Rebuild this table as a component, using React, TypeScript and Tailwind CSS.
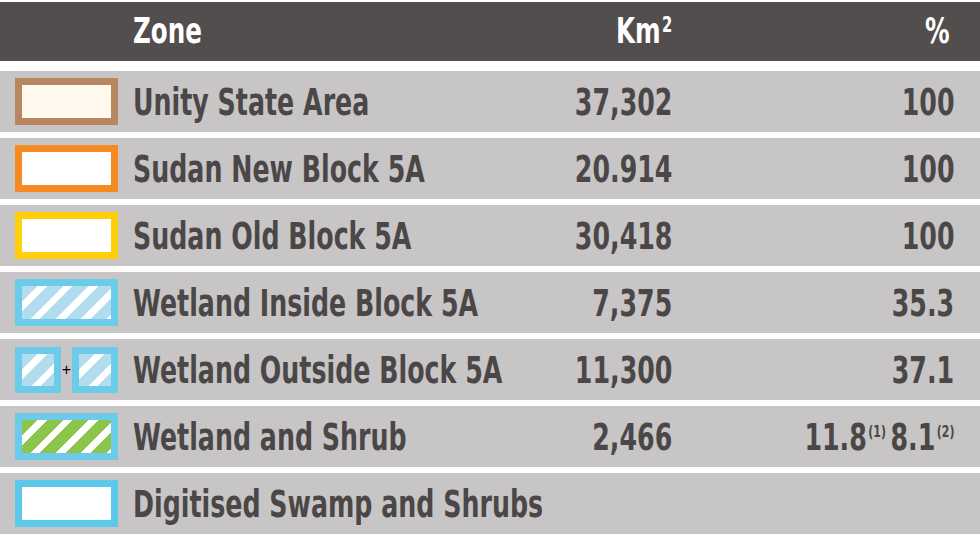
const FONT = "font-['DejaVu_Sans_Condensed','DejaVu_Sans',sans-serif]";

type Swatch = "brown" | "orange" | "yellow" | "blueStripe" | "double" | "greenStripe" | "blue";

interface ZoneRow {
  swatch: Swatch;
  name: string;
  km?: string;
  pct?: React.ReactNode;
}

// the source face is a bold condensed; squeeze DejaVu Condensed a bit more to match
function Narrow({ children, right, head }: { children: React.ReactNode; right?: boolean; head?: boolean }) {
  return (
    <span
      className={`inline-block whitespace-nowrap ${head ? "scale-x-[0.78]" : "scale-x-[0.76]"} ${
        right ? "origin-right" : "origin-left"
      }`}
    >
      {children}
    </span>
  );
}

const ROWS: ZoneRow[] = [
  { swatch: "brown", name: "Unity State Area", km: "37,302", pct: "100" },
  { swatch: "orange", name: "Sudan New Block 5A", km: "20.914", pct: "100" },
  { swatch: "yellow", name: "Sudan Old Block 5A", km: "30,418", pct: "100" },
  { swatch: "blueStripe", name: "Wetland Inside Block 5A", km: "7,375", pct: "35.3" },
  { swatch: "double", name: "Wetland Outside Block 5A", km: "11,300", pct: "37.1" },
  {
    swatch: "greenStripe",
    name: "Wetland and Shrub",
    km: "2,466",
    pct: (
      <>
        11.8<sup className="text-[16px] relative -top-[13px] ml-[2px] mr-[6px]">(1)</sup>8.1
        <sup className="text-[16px] relative -top-[13px] ml-[2px]">(2)</sup>
      </>
    ),
  },
  { swatch: "blue", name: "Digitised Swamp and Shrubs" },
];

const blueStripes =
  "bg-[repeating-linear-gradient(135deg,#b3dcee_0px,#b3dcee_11px,#ffffff_11px,#ffffff_18px)]";
const greenStripes =
  "bg-[repeating-linear-gradient(135deg,#8cc54c_0px,#8cc54c_11px,#ffffff_11px,#ffffff_18px)]";

function SwatchBox({ kind }: { kind: Swatch }) {
  if (kind === "double") {
    return (
      <div className="flex items-center w-[103px]">
        <div className={`w-[46px] h-[46px] border-[7px] border-[#6ccbe9] ${blueStripes}`} />
        <div className="w-[11px] text-center text-[16px] font-normal leading-none text-black font-['Liberation_Sans',sans-serif]">+</div>
        <div className={`w-[46px] h-[46px] border-[7px] border-[#6ccbe9] ${blueStripes}`} />
      </div>
    );
  }
  const styles: Record<string, string> = {
    brown: "border-[#b9875f] bg-[#fff9ee]",
    orange: "border-[#f58a22] bg-white",
    yellow: "border-[#fecf0a] bg-white",
    blueStripe: `border-[#6ccbe9] ${blueStripes}`,
    greenStripe: `border-[#6ccbe9] ${greenStripes}`,
    blue: "border-[#5cc9ea] bg-white",
  };
  return <div className={`w-[103px] h-[47px] border-[7px] ${styles[kind]}`} />;
}

export default function App() {
  return (
    <div className={`w-[980px] h-[534px] bg-white overflow-hidden pt-[2px] ${FONT} font-bold`}>
      {/* Header */}
      <div className="flex items-center h-[59px] bg-[#524e4d] text-white text-[35px] leading-none">
        <div className="w-[133px] shrink-0" />
        <div className="flex-1">
          <Narrow head>Zone</Narrow>
        </div>
        <div className="w-[140px] text-right">
          <Narrow head right>
            Km<sup className="text-[21px] relative -top-[11px] ml-[2px]">2</sup>
          </Narrow>
        </div>
        <div className="w-[308px] text-right pr-[30px]">
          <Narrow head right>%</Narrow>
        </div>
      </div>

      {/* Rows */}
      <div className="flex flex-col gap-[6px] mt-[10px]">
        {ROWS.map((row) => (
          <div
            key={row.name}
            className="flex items-center h-[61px] bg-[#c7c5c6] text-[#4b4747] text-[37px] leading-none"
          >
            <div className="pl-[15px] w-[133px] shrink-0">
              <SwatchBox kind={row.swatch} />
            </div>
            <div className="flex-1 min-w-0 pt-[2px]">
              <Narrow>{row.name}</Narrow>
            </div>
            <div className="w-[140px] text-right pt-[2px]">{row.km && <Narrow right>{row.km}</Narrow>}</div>
            <div className="w-[308px] text-right pr-[26px] pt-[2px]">{row.pct && <Narrow right>{row.pct}</Narrow>}</div>
          </div>
        ))}
      </div>
    </div>
  );
}
